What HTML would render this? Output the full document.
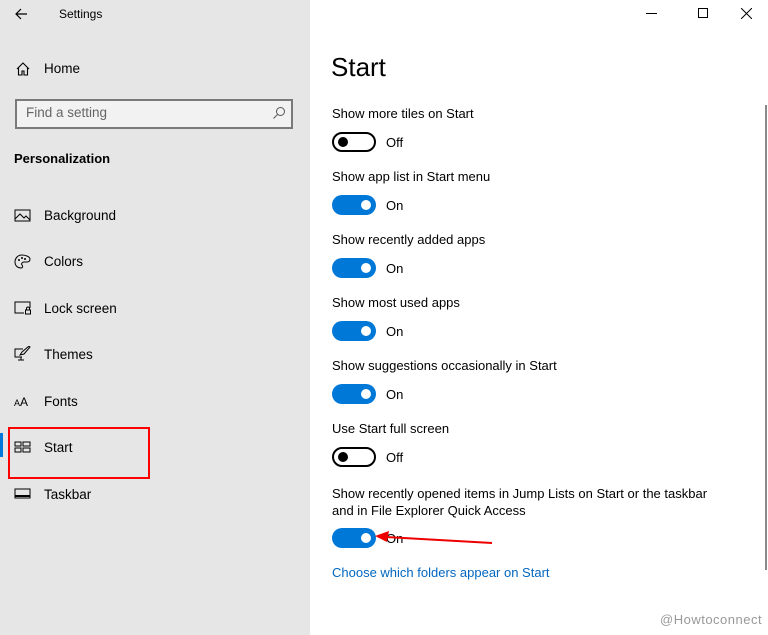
<!DOCTYPE html>
<html><head><meta charset="utf-8"><style>
*{margin:0;padding:0;box-sizing:border-box}
body{width:768px;height:635px;overflow:hidden;background:#fff;font-family:"Liberation Sans",sans-serif;color:#000;position:relative}
.side{position:absolute;left:0;top:0;width:310px;height:635px;background:#e6e6e6}
.a{position:absolute;white-space:nowrap}
.t{font-size:13px}
.nav{font-size:13.5px;left:44px}
.ic{position:absolute;left:14px}
.tog{position:absolute;left:332px;width:44px;height:20px;border-radius:10px}
.on{background:#0078d7}
.on::after{content:"";position:absolute;right:5px;top:5px;width:10px;height:10px;border-radius:50%;background:#fff}
.off{border:2px solid #000}
.off::after{content:"";position:absolute;left:4px;top:3px;width:10px;height:10px;border-radius:50%;background:#000}
.lab{font-size:13px;left:332px}
.st{font-size:13px;left:386px}
</style></head><body>
<div class="side"></div>
<svg class="a" style="left:14px;top:7px" width="14" height="14" viewBox="0 0 14 14"><path d="M13 7H2M7 2L2 7l5 5" stroke="#000" fill="none" stroke-width="1.2"/></svg>
<div class="a" style="left:59px;top:7px;font-size:12px">Settings</div>
<svg class="a" style="left:16px;top:62px" width="14" height="14" viewBox="0 0 14 14"><path d="M1 7L7 1l6 6M2.5 5.5V13h3.5V9h2v4h3.5V5.5" stroke="#000" fill="none" stroke-width="1.1"/></svg>
<div class="a nav" style="top:61px">Home</div>
<div class="a" style="left:15px;top:99px;width:278px;height:30px;border:2px solid #7a7a7a;background:#f2f2f2"></div>
<div class="a" style="left:26px;top:105px;font-size:13.5px;color:#666">Find a setting</div>
<svg class="a" style="left:272px;top:106px" width="14" height="14" viewBox="0 0 14 14"><circle cx="8.5" cy="5.5" r="4" stroke="#555" fill="none"/><path d="M5.5 8.5L1.5 12.5" stroke="#555"/></svg>
<div class="a" style="left:14px;top:151px;font-size:13px;font-weight:bold">Personalization</div>
<svg class="ic" style="top:209px" width="18" height="14" viewBox="0 0 18 14"><rect x="1" y="1" width="15" height="11" stroke="#000" fill="none"/><path d="M1 10l5-5 4 4 2-2 4 4" stroke="#000" fill="none"/></svg>
<div class="a nav" style="top:208px">Background</div>
<svg class="ic" style="top:254px" width="18" height="16" viewBox="0 0 18 16"><path d="M8 1C3 1 1 5 1 8c0 4 3 6 6 6 2 0 2-2 1-3s0-3 2-3h3c2 0 3-1 3-3C16 3 12 1 8 1z" stroke="#000" fill="none"/><circle cx="5" cy="6" r="1"/><circle cx="8" cy="4" r="1"/><circle cx="11" cy="5" r="1"/></svg>
<div class="a nav" style="top:254px">Colors</div>
<svg class="ic" style="top:301px" width="18" height="14" viewBox="0 0 18 14"><path d="M10 12H1V1h15v6" stroke="#000" fill="none"/><rect x="11.5" y="9" width="5" height="4" stroke="#000" fill="none"/><path d="M12.5 9V7.5a1.5 1.5 0 013 0V9" stroke="#000" fill="none"/></svg>
<div class="a nav" style="top:301px">Lock screen</div>
<svg class="ic" style="top:346px" width="18" height="16" viewBox="0 0 18 16"><path d="M8 11H1V3h8M4 14h6M7 11v3" stroke="#000" fill="none"/><path d="M6 9l2-3 7-6 1 1-6 7z" stroke="#000" fill="none"/></svg>
<div class="a nav" style="top:347px">Themes</div>
<div class="a" style="left:14px;top:395px;font-size:9px">A<span style="font-size:12px">A</span></div>
<div class="a nav" style="top:394px">Fonts</div>
<div class="a" style="left:0;top:433px;width:3px;height:24px;background:#0078d7"></div>
<svg class="ic" style="top:441px" width="18" height="12" viewBox="0 0 18 12"><rect x="1" y="1" width="6" height="4" stroke="#000" fill="none"/><rect x="9" y="1" width="7" height="4" stroke="#000" fill="none"/><rect x="1" y="7" width="6" height="4" stroke="#000" fill="none"/><rect x="9" y="7" width="7" height="4" stroke="#000" fill="none"/></svg>
<div class="a nav" style="top:440px">Start</div>
<div class="a" style="left:8px;top:427px;width:142px;height:52px;border:2px solid #f00"></div>
<svg class="ic" style="top:488px" width="18" height="12" viewBox="0 0 18 12"><rect x="1" y="1" width="15" height="9" stroke="#000" fill="none"/><path d="M1 8h15" stroke="#000" stroke-width="2"/></svg>
<div class="a nav" style="top:487px">Taskbar</div>

<div class="a" style="left:646px;top:13px;width:11px;height:1px;background:#000"></div>
<div class="a" style="left:698px;top:8px;width:10px;height:10px;border:1px solid #000"></div>
<svg class="a" style="left:741px;top:8px" width="11" height="11" viewBox="0 0 11 11"><path d="M0 0L11 11M11 0L0 11" stroke="#000"/></svg>

<div class="a" style="left:331px;top:52px;font-size:26px;font-weight:300">Start</div>
<div class="a" style="left:765px;top:105px;width:2px;height:465px;background:#8a8a8a"></div>

<div class="a lab" style="top:106px">Show more tiles on Start</div>
<div class="tog off" style="top:132px"></div><div class="a st" style="top:135px">Off</div>
<div class="a lab" style="top:169px">Show app list in Start menu</div>
<div class="tog on" style="top:195px"></div><div class="a st" style="top:198px">On</div>
<div class="a lab" style="top:232px">Show recently added apps</div>
<div class="tog on" style="top:258px"></div><div class="a st" style="top:261px">On</div>
<div class="a lab" style="top:295px">Show most used apps</div>
<div class="tog on" style="top:321px"></div><div class="a st" style="top:324px">On</div>
<div class="a lab" style="top:358px">Show suggestions occasionally in Start</div>
<div class="tog on" style="top:384px"></div><div class="a st" style="top:387px">On</div>
<div class="a lab" style="top:421px">Use Start full screen</div>
<div class="tog off" style="top:447px"></div><div class="a st" style="top:450px">Off</div>
<div class="a lab" style="top:485px;line-height:17px">Show recently opened items in Jump Lists on Start or the taskbar<br>and in File Explorer Quick Access</div>
<div class="tog on" style="top:528px"></div><div class="a st" style="top:531px">On</div>
<svg class="a" style="left:370px;top:528px" width="130" height="20" viewBox="0 0 130 20"><path d="M122 15L16 9" stroke="#e00" stroke-width="2"/><path d="M5 8l14-5-2 11z" fill="#e00"/></svg>
<div class="a" style="left:332px;top:565px;font-size:13px;color:#0067c0">Choose which folders appear on Start</div>
<div class="a" style="left:660px;top:612px;font-size:13px;color:#999;letter-spacing:0.5px">@Howtoconnect</div>
</body></html>
